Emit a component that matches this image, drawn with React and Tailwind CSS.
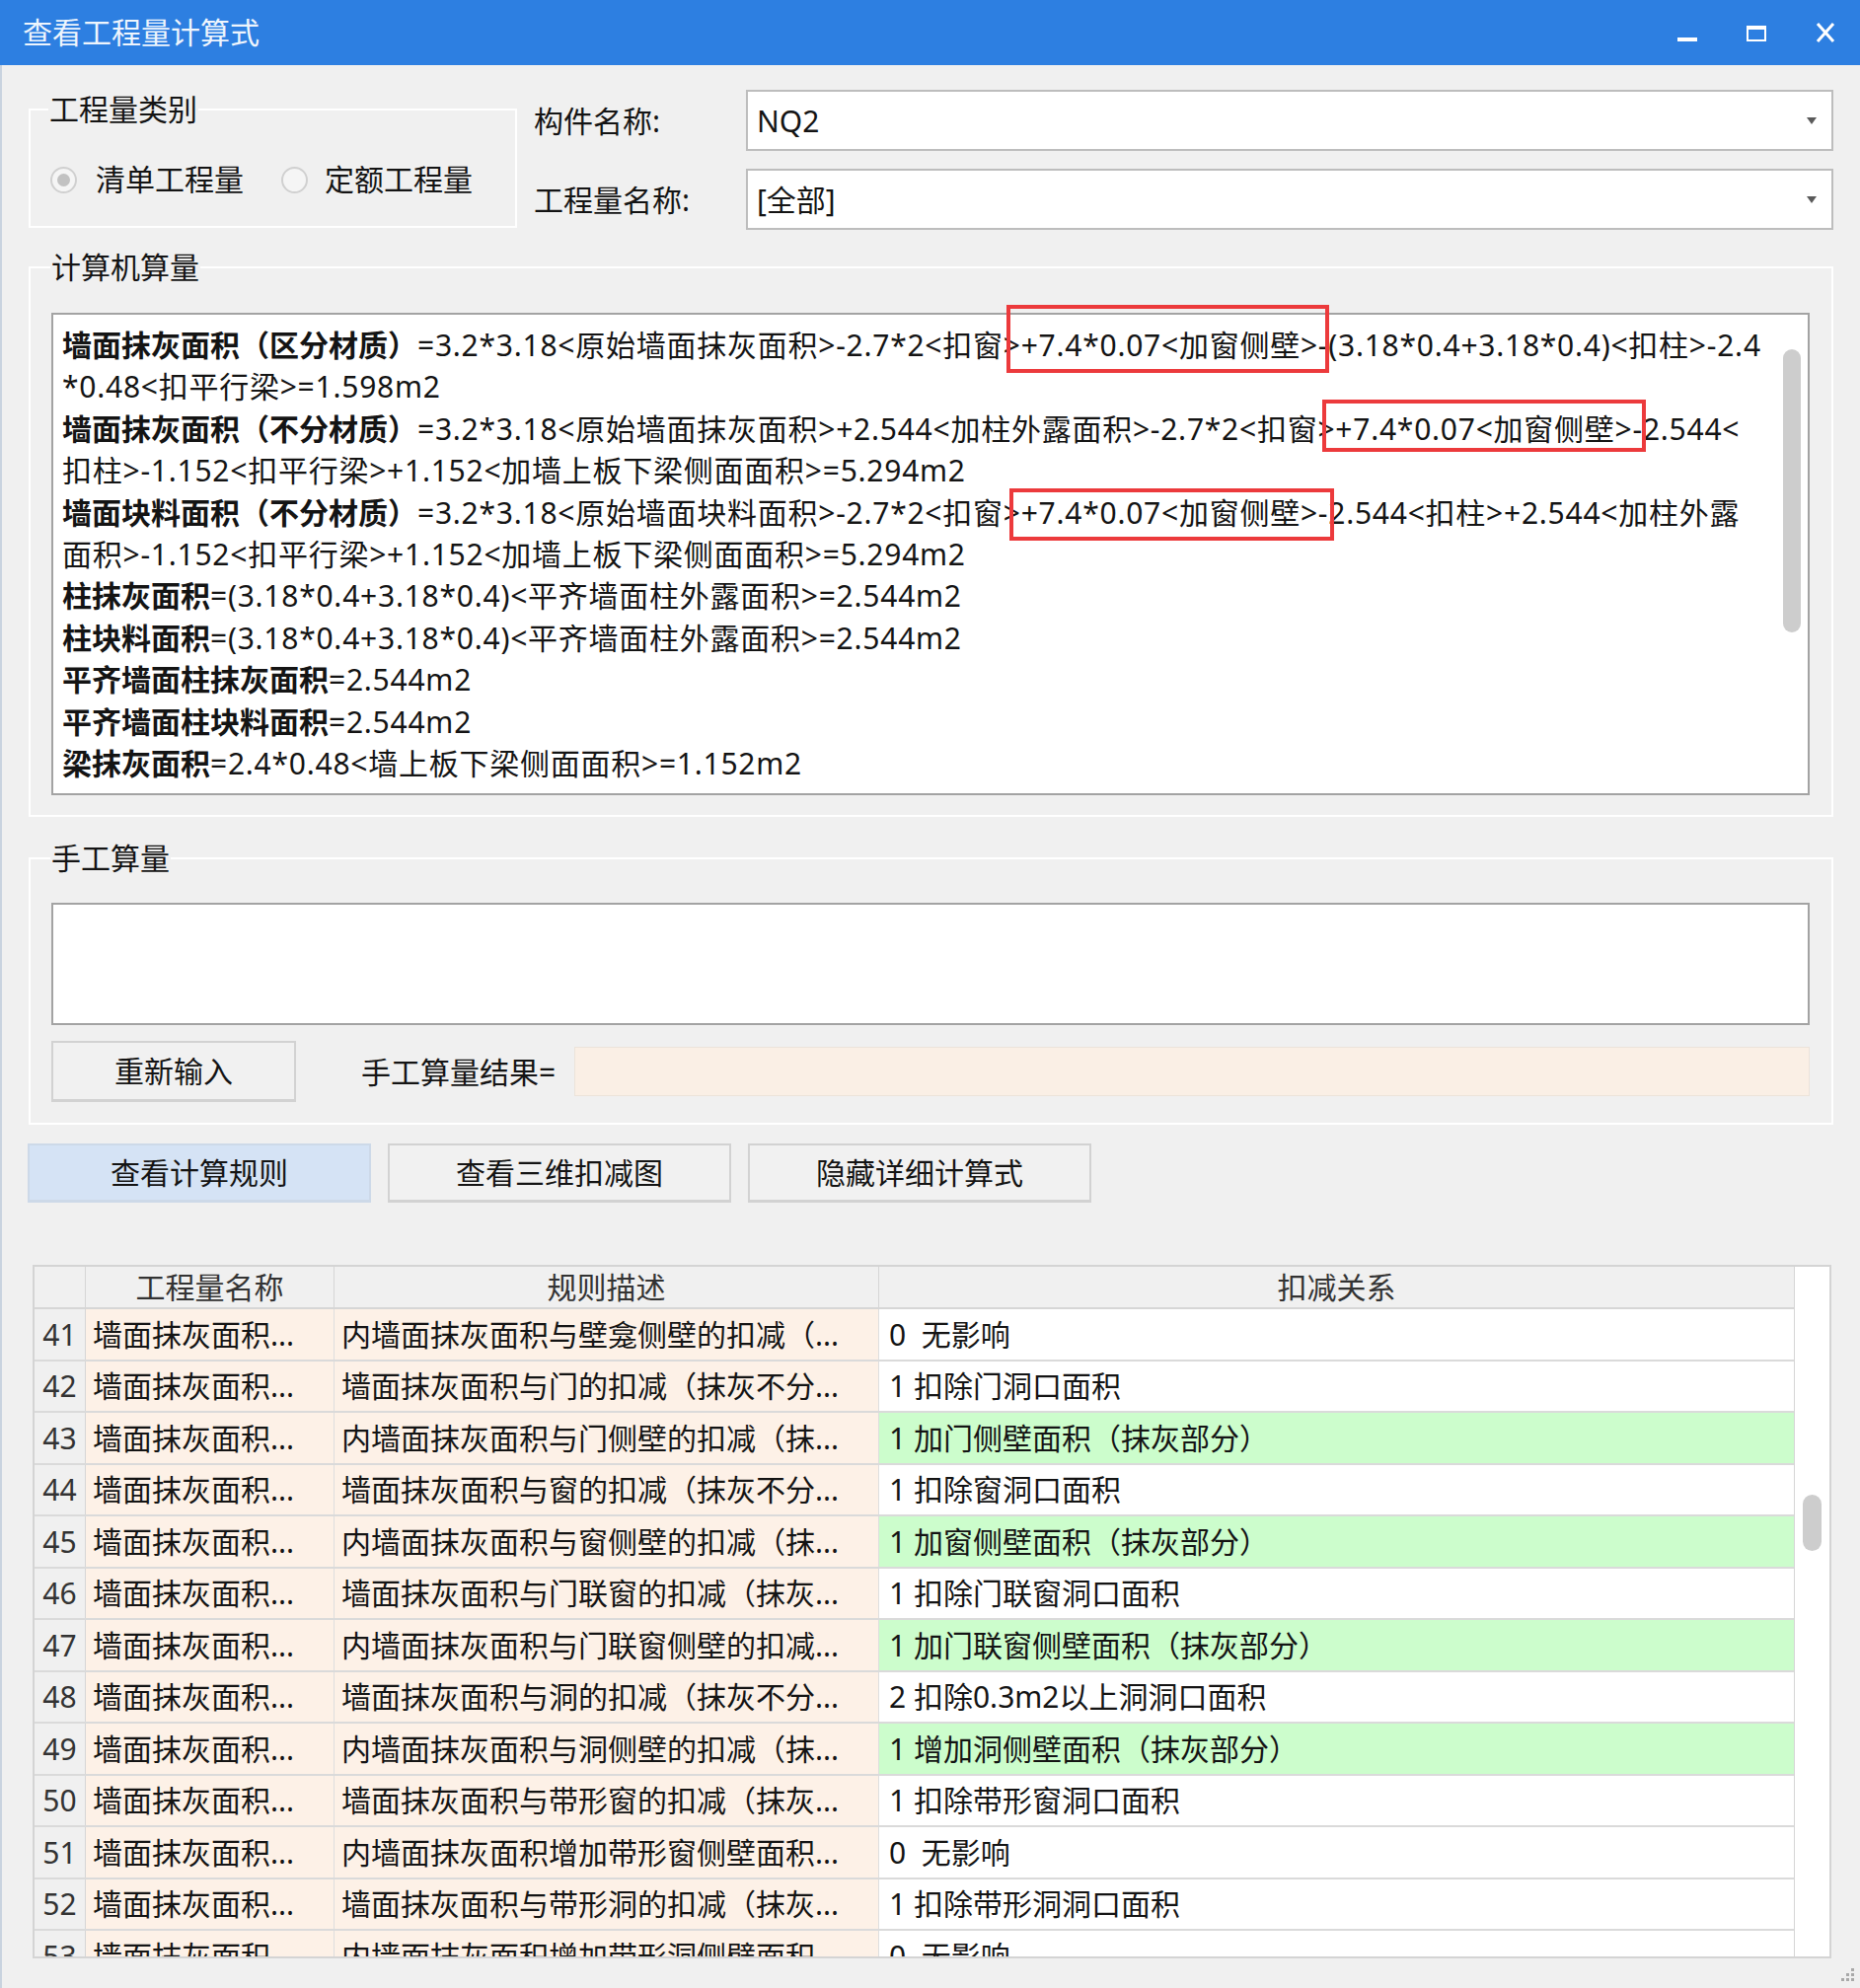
import React from 'react';

const formulaLines = [
  { b: '墙面抹灰面积（区分材质）', pre: '=3.2*3.18<原始墙面抹灰面积>-2.7*2<扣窗>', box: 1, post: '-(3.18*0.4+3.18*0.4)<扣柱>-2.4' },
  { t: '*0.48<扣平行梁>=1.598m2' },
  { b: '墙面抹灰面积（不分材质）', pre: '=3.2*3.18<原始墙面抹灰面积>+2.544<加柱外露面积>-2.7*2<扣窗>', box: 2, post: '-2.544<' },
  { t: '扣柱>-1.152<扣平行梁>+1.152<加墙上板下梁侧面面积>=5.294m2' },
  { b: '墙面块料面积（不分材质）', pre: '=3.2*3.18<原始墙面块料面积>-2.7*2<扣窗>', box: 3, post: '-2.544<扣柱>+2.544<加柱外露' },
  { t: '面积>-1.152<扣平行梁>+1.152<加墙上板下梁侧面面积>=5.294m2' },
  { b: '柱抹灰面积', t: '=(3.18*0.4+3.18*0.4)<平齐墙面柱外露面积>=2.544m2' },
  { b: '柱块料面积', t: '=(3.18*0.4+3.18*0.4)<平齐墙面柱外露面积>=2.544m2' },
  { b: '平齐墙面柱抹灰面积', t: '=2.544m2' },
  { b: '平齐墙面柱块料面积', t: '=2.544m2' },
  { b: '梁抹灰面积', t: '=2.4*0.48<墙上板下梁侧面面积>=1.152m2' },
];

const rows = [
  [41, '内墙面抹灰面积与壁龛侧壁的扣减（...', '0  无影响', false],
  [42, '墙面抹灰面积与门的扣减（抹灰不分...', '1 扣除门洞口面积', false],
  [43, '内墙面抹灰面积与门侧壁的扣减（抹...', '1 加门侧壁面积（抹灰部分）', true],
  [44, '墙面抹灰面积与窗的扣减（抹灰不分...', '1 扣除窗洞口面积', false],
  [45, '内墙面抹灰面积与窗侧壁的扣减（抹...', '1 加窗侧壁面积（抹灰部分）', true],
  [46, '墙面抹灰面积与门联窗的扣减（抹灰...', '1 扣除门联窗洞口面积', false],
  [47, '内墙面抹灰面积与门联窗侧壁的扣减...', '1 加门联窗侧壁面积（抹灰部分）', true],
  [48, '墙面抹灰面积与洞的扣减（抹灰不分...', '2 扣除0.3m2以上洞洞口面积', false],
  [49, '内墙面抹灰面积与洞侧壁的扣减（抹...', '1 增加洞侧壁面积（抹灰部分）', true],
  [50, '墙面抹灰面积与带形窗的扣减（抹灰...', '1 扣除带形窗洞口面积', false],
  [51, '内墙面抹灰面积增加带形窗侧壁面积...', '0  无影响', false],
  [52, '墙面抹灰面积与带形洞的扣减（抹灰...', '1 扣除带形洞洞口面积', false],
  [53, '内墙面抹灰面积增加带形洞侧壁面积...', '0  无影响', false],
];

function RedBox({ n }) {
  // annotation rectangles drawn over the formula text
  const pos =
    n === 1
      ? '-left-[15px] -right-[11px] -top-[20px] -bottom-[8px]'
      : n === 2
      ? '-left-[13px] -right-[14px] -top-[9px] -bottom-[3px]'
      : '-left-[12px] -right-[16px] -top-[4px] -bottom-[8px]';
  return (
    <span className="relative">
      +7.4*0.07&lt;加窗侧壁&gt;
      <span className={`absolute ${pos} border-4 border-[#ec3a3c] pointer-events-none`} />
    </span>
  );
}

function Combo({ value }) {
  return (
    <div className="h-[62px] bg-white border-2 border-[#bdbdbd] flex items-center pl-[9px] pr-[15px]">
      <span>{value}</span>
      <svg className="ml-auto" width="10" height="7" viewBox="0 0 10 7">
        <polygon points="0,0 10,0 5,7" fill="#5a5a5a" />
      </svg>
    </div>
  );
}

function Radio({ checked }) {
  return (
    <span className="w-[27px] h-[27px] rounded-full border-2 border-[#d0d0d0] bg-[#f5f5f5] flex items-center justify-center">
      {checked && <span className="w-[13px] h-[13px] rounded-full bg-[#c2c2c2]" />}
    </span>
  );
}

function Btn({ children, active, w }) {
  return (
    <div
      className={`${w} flex items-center justify-center border-2 ${
        active ? 'bg-[#d5e3f5] border-[#cdd9e8]' : 'bg-[#f1f1f1] border-[#d2d2d2]'
      } border-b-[3px]`}
    >
      {children}
    </div>
  );
}

export default function App() {
  return (
    <div className="w-[1885px] h-[2015px] overflow-hidden flex flex-col bg-[#f0f0f0] text-[30px] text-[#141414] font-['Noto_Sans','Noto_Sans_CJK_SC',sans-serif]">
      {/* title bar */}
      <div className="h-[66px] shrink-0 bg-[#2d7fe1] flex items-center pl-[23px] pr-[25px] text-[#eef5fd]">
        <span className="leading-none">查看工程量计算式</span>
        <div className="ml-auto flex items-center gap-[50px]">
          <svg width="20" height="20" viewBox="0 0 20 20">
            <rect x="0" y="15" width="20" height="4" fill="#fff" />
          </svg>
          <svg width="20" height="20" viewBox="0 0 20 20">
            <rect x="1" y="4" width="18" height="14" fill="none" stroke="#fff" strokeWidth="2" />
            <rect x="0" y="3" width="20" height="4" fill="#fff" />
          </svg>
          <svg width="20" height="20" viewBox="0 0 20 20">
            <path d="M2 1 L18 19 M18 1 L2 19" stroke="#fff" strokeWidth="3" />
          </svg>
        </div>
      </div>

      <div className="flex-1 flex flex-col pl-[27px] pr-[27px] border-l-2 border-[#c9d3df]">
        {/* top row */}
        <div className="flex items-start">
          <fieldset className="mt-[27px] w-[495px] h-[138px] border-2 border-white">
            <legend className="ml-[18px] px-[1px] leading-[36px]">工程量类别</legend>
            <div className="flex items-center pl-[20px] pt-[35px] leading-[36px]">
              <Radio checked />
              <span className="ml-[19px]">清单工程量</span>
              <span className="ml-[38px]">
                <Radio />
              </span>
              <span className="ml-[17px]">定额工程量</span>
            </div>
          </fieldset>
          <div className="flex-1 ml-[17px] mt-[25px] grid grid-cols-[215px_1fr] gap-y-[18px] items-center">
            <span>构件名称:</span>
            <Combo value="NQ2" />
            <span>工程量名称:</span>
            <Combo value="[全部]" />
          </div>
        </div>

        {/* 计算机算量 */}
        <fieldset className="mt-[20px] border-2 border-white pl-[21px] pr-[22px] pb-[20px]">
          <legend className="-ml-[1px] px-[1px] leading-[36px]">计算机算量</legend>
          <div className="mt-[28px] h-[489px] bg-white border-2 border-[#a3a3a3] flex">
            <div className="flex-1 min-w-0 pl-[9px] pt-[10px] leading-[42.4px] whitespace-nowrap">
              {formulaLines.map((l, i) => (
                <div key={i}>
                  {l.b && <span className="font-bold">{l.b}</span>}
                  <span className="tracking-[0.75px]">
                    {l.box ? (
                      <>
                        {l.pre}
                        <RedBox n={l.box} />
                        {l.post}
                      </>
                    ) : (
                      l.t
                    )}
                  </span>
                </div>
              ))}
            </div>
            <div className="w-[32px] flex justify-center pt-[35px]">
              <div className="w-[18px] h-[287px] rounded-full bg-[#cdcdcd]" />
            </div>
          </div>
        </fieldset>

        {/* 手工算量 */}
        <fieldset className="mt-[24px] border-2 border-white pl-[21px] pr-[22px] pb-[21px]">
          <legend className="-ml-[1px] px-[1px] leading-[36px]">手工算量</legend>
          <div className="mt-[27px] h-[124px] bg-white border-2 border-[#a3a3a3]" />
          <div className="mt-[16px] flex items-center">
            <Btn w="w-[248px] h-[62px]">重新输入</Btn>
            <span className="ml-[66px] w-[216px]">手工算量结果=</span>
            <div className="flex-1 h-[50px] bg-[#faefe5] border border-[#ece3da]" />
          </div>
        </fieldset>

        {/* action buttons */}
        <div className="mt-[19px] flex gap-[17px] -ml-[1px]">
          <Btn active w="w-[348px] h-[60px]">查看计算规则</Btn>
          <Btn w="w-[348px] h-[60px]">查看三维扣减图</Btn>
          <Btn w="w-[348px] h-[60px]">隐藏详细计算式</Btn>
        </div>

        {/* rules table */}
        <div className="mt-[63px] ml-[4px] mr-[2px] h-[703px] shrink-0 border-2 border-[#d4d4d4] bg-white flex overflow-hidden">
          <div className="flex-1 overflow-hidden">
            <div className="grid grid-cols-[52px_252px_552px_1fr] h-[43px] bg-[#f0f0f0] border-b-2 border-[#d6d6d6] text-[#333] leading-[41px] text-center">
              <div className="border-r border-[#d6d6d6]" />
              <div className="border-r border-[#d6d6d6]">工程量名称</div>
              <div className="border-r border-[#d6d6d6]">规则描述</div>
              <div>扣减关系</div>
            </div>
            {rows.map(([n, desc, rel, green]) => (
              <div
                key={n}
                className="grid grid-cols-[52px_252px_552px_1fr] h-[52.5px] border-b-2 border-[#dadada] items-stretch"
              >
                <div className="bg-[#f0f0f0] border-r border-[#d6d6d6] flex items-center justify-center text-[#333]">
                  {n}
                </div>
                <div className="bg-[#fdf1e7] border-r border-[#dedede] flex items-center pl-[7px]">墙面抹灰面积...</div>
                <div className="bg-[#fdf1e7] border-r border-[#dedede] flex items-center pl-[7px] whitespace-nowrap overflow-hidden">
                  {desc}
                </div>
                <div className={`${green ? 'bg-[#ccfdcc]' : 'bg-white'} flex items-center pl-[10px] whitespace-pre`}>
                  {rel}
                </div>
              </div>
            ))}
          </div>
          <div className="w-[36px] border-l border-[#d6d6d6] flex justify-center pt-[231px]">
            <div className="w-[19px] h-[57px] rounded-full bg-[#cdcdcd]" />
          </div>
        </div>

        {/* size grip */}
        <div className="flex-1 flex items-end justify-end pb-[4px] -mr-[22px]">
          <svg width="18" height="18" viewBox="0 0 18 18">
            <g fill="#a9a9a9">
              <rect x="14" y="2" width="3" height="3" />
              <rect x="9" y="7" width="3" height="3" />
              <rect x="14" y="7" width="3" height="3" />
              <rect x="4" y="12" width="3" height="3" />
              <rect x="9" y="12" width="3" height="3" />
              <rect x="14" y="12" width="3" height="3" />
            </g>
          </svg>
        </div>
      </div>
    </div>
  );
}
